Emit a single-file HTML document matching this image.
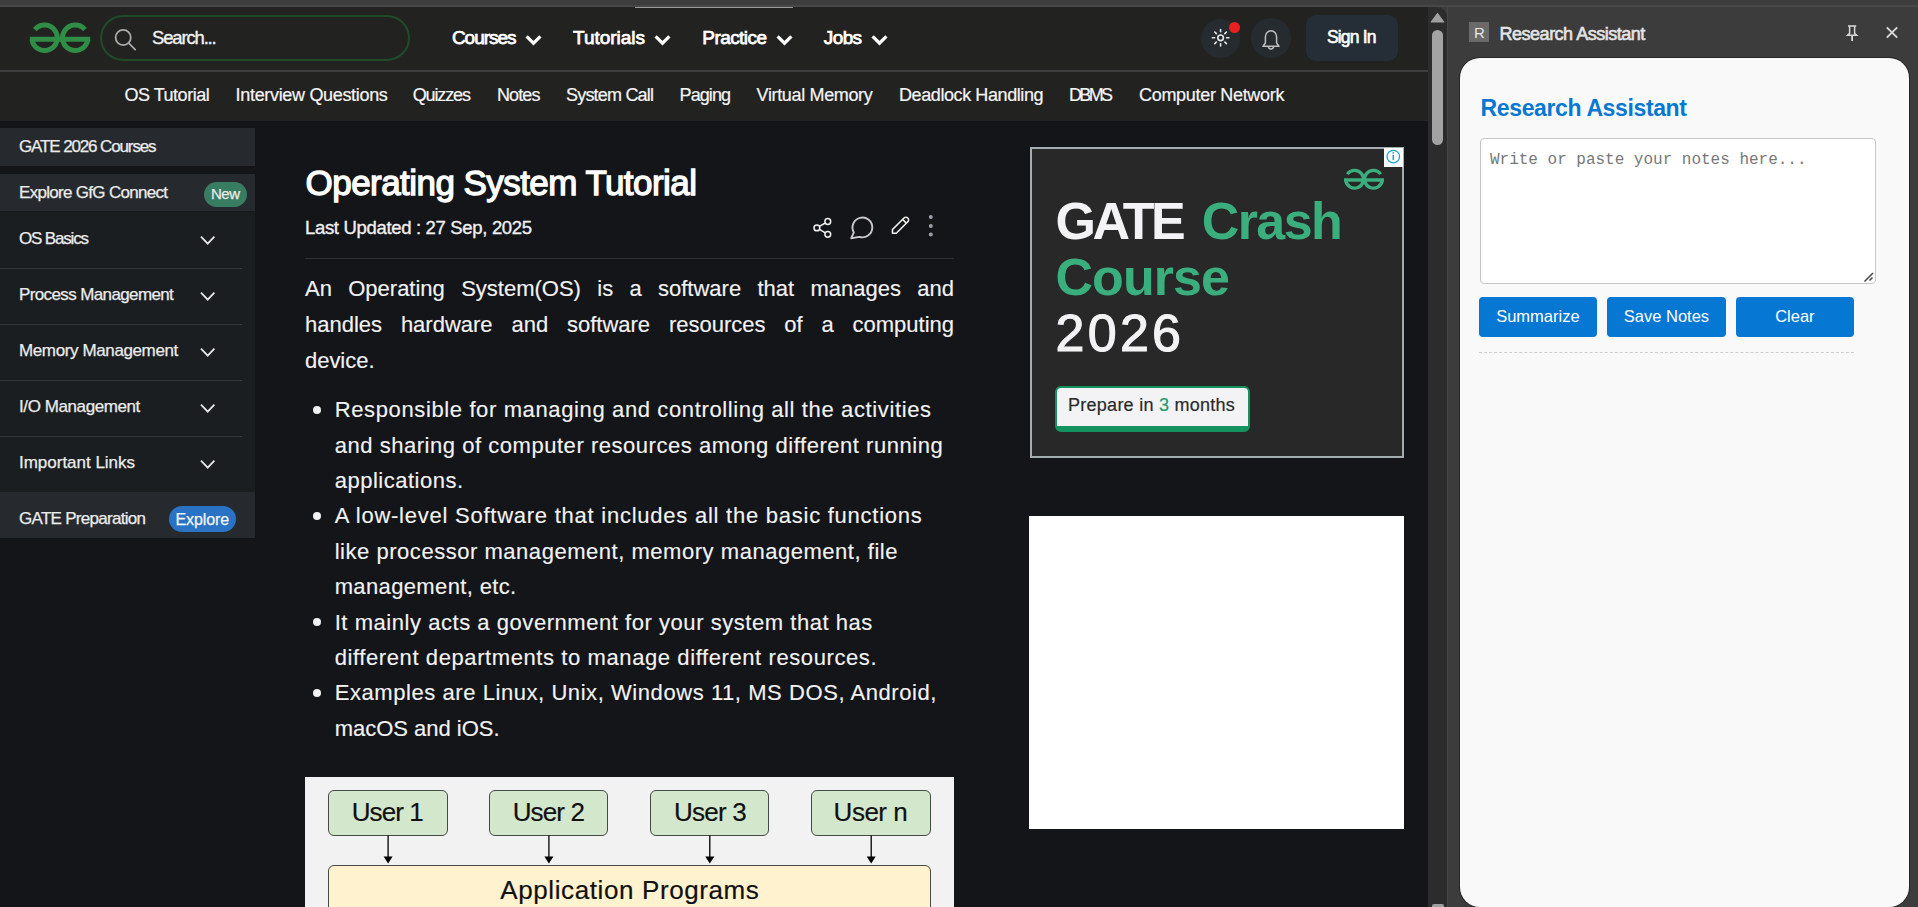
<!DOCTYPE html><html><head><meta charset="utf-8"><style>
html,body{margin:0;padding:0;}
body{width:1918px;height:907px;overflow:hidden;position:relative;background:#141519;font-family:"Liberation Sans",sans-serif;}
.t{position:absolute;white-space:pre;}
.b{position:absolute;box-sizing:border-box;}
svg{position:absolute;overflow:visible;}
</style></head><body>
<div class="b" style="left:0px;top:0px;width:1918px;height:5px;background:#3d3d3d;"></div>
<div class="b" style="left:0px;top:5px;width:1918px;height:2px;background:#474847;"></div>
<div class="b" style="left:0px;top:7px;width:1428px;height:63px;background:#222221;"></div>
<div class="b" style="left:635px;top:7px;width:158px;height:1px;background:#9a9a9a;"></div>
<div class="b" style="left:0px;top:70px;width:1428px;height:2px;background:#3e3e3e;"></div>
<div class="b" style="left:0px;top:72px;width:1428px;height:49px;background:#222221;"></div>
<svg style="left:0;top:0" width="1" height="1"><g fill="none" stroke="#2f8d46" stroke-width="5">
<path d="M 34.87 29.64 A 12.7 12.7 0 1 1 31.98 39.20"/>
<path d="M 84.93 29.64 A 12.7 12.7 0 1 0 87.82 39.20"/>
<path d="M 29.9 39.2 L 90.2 39.2"/>
</g></svg>
<div class="b" style="left:100px;top:15px;width:310px;height:46px;border:2px solid #204b29;border-radius:23px;"></div>
<svg style="left:0;top:0" width="1" height="1"><g fill="none" stroke="#a9a9a9" stroke-width="1.8">
<circle cx="123.2" cy="37.5" r="7.6"/><path d="M 128.8 43.2 L 135.2 49.6" stroke-linecap="round"/></g></svg>
<div class="t" style="left:152.00px;top:29.00px;font-size:18.5px;line-height:18.5px;font-family:'Liberation Sans', sans-serif;font-weight:normal;color:#f2f2f2;letter-spacing:-1.164px;-webkit-text-stroke:0.35px #f2f2f2;">Search...</div>
<div class="t" style="left:451.90px;top:28.00px;font-size:19px;line-height:19px;font-family:'Liberation Sans', sans-serif;font-weight:normal;color:#ffffff;letter-spacing:-1.022px;-webkit-text-stroke:0.75px #ffffff;">Courses</div>
<svg style="left:0;top:0" width="1" height="1"><polyline points="526.6,36.3 533.5,43.2 540.4,36.3" fill="none" stroke="#fff" stroke-width="3.2" stroke-linejoin="miter"/></svg>
<div class="t" style="left:573.00px;top:28.00px;font-size:19px;line-height:19px;font-family:'Liberation Sans', sans-serif;font-weight:normal;color:#ffffff;letter-spacing:-0.018px;-webkit-text-stroke:0.75px #ffffff;">Tutorials</div>
<svg style="left:0;top:0" width="1" height="1"><polyline points="655.6,36.3 662.5,43.2 669.4,36.3" fill="none" stroke="#fff" stroke-width="3.2" stroke-linejoin="miter"/></svg>
<div class="t" style="left:702.30px;top:28.00px;font-size:19px;line-height:19px;font-family:'Liberation Sans', sans-serif;font-weight:normal;color:#ffffff;letter-spacing:-0.561px;-webkit-text-stroke:0.75px #ffffff;">Practice</div>
<svg style="left:0;top:0" width="1" height="1"><polyline points="777.6,36.3 784.5,43.2 791.4,36.3" fill="none" stroke="#fff" stroke-width="3.2" stroke-linejoin="miter"/></svg>
<div class="t" style="left:823.80px;top:28.00px;font-size:19px;line-height:19px;font-family:'Liberation Sans', sans-serif;font-weight:normal;color:#ffffff;letter-spacing:-0.608px;-webkit-text-stroke:0.75px #ffffff;">Jobs</div>
<svg style="left:0;top:0" width="1" height="1"><polyline points="872.6,36.3 879.5,43.2 886.4,36.3" fill="none" stroke="#fff" stroke-width="3.2" stroke-linejoin="miter"/></svg>
<div class="b" style="left:1200.5px;top:18.5px;width:39px;height:39px;border-radius:50%;background:#262b30"></div>
<div class="b" style="left:1251px;top:18px;width:40px;height:40px;border-radius:50%;background:#262b30"></div>
<svg style="left:0;top:0" width="1" height="1"><g stroke="#e8e8e8" stroke-width="1.6" fill="none" stroke-linecap="round"><circle cx="1220.6" cy="37.8" r="2.8"/><path d="M 1226.60 37.80 L 1228.80 37.80"/><path d="M 1224.84 42.04 L 1226.40 43.60"/><path d="M 1220.60 43.80 L 1220.60 46.00"/><path d="M 1216.36 42.04 L 1214.80 43.60"/><path d="M 1214.60 37.80 L 1212.40 37.80"/><path d="M 1216.36 33.56 L 1214.80 32.00"/><path d="M 1220.60 31.80 L 1220.60 29.60"/><path d="M 1224.84 33.56 L 1226.40 32.00"/></g></svg>
<div class="b" style="left:1229px;top:21.5px;width:11px;height:11px;border-radius:50%;background:#e8201f"></div>
<svg style="left:0;top:0" width="1" height="1"><g stroke="#bdbdbd" stroke-width="1.5" fill="none" stroke-linejoin="round">
<path d="M 1263 46.3 L 1279 46.3 L 1276.6 43 L 1276.6 37 A 5.6 6.4 0 0 0 1265.4 37 L 1265.4 43 Z"/>
<path d="M 1268.4 46.3 A 2.6 2.6 0 0 0 1273.6 46.3"/></g></svg>
<div class="b" style="left:1306px;top:15px;width:92px;height:46px;border-radius:10px;background:#252e36"></div>
<div class="t" style="left:1327.00px;top:29.00px;font-size:17.5px;line-height:17.5px;font-family:'Liberation Sans', sans-serif;font-weight:normal;color:#ffffff;letter-spacing:-0.847px;-webkit-text-stroke:0.6px #ffffff;">Sign In</div>
<div class="t" style="left:124.50px;top:86.00px;font-size:18px;line-height:18px;font-family:'Liberation Sans', sans-serif;font-weight:normal;color:#f5f5f5;letter-spacing:-0.485px;-webkit-text-stroke:0.2px #f5f5f5;">OS Tutorial</div>
<div class="t" style="left:235.60px;top:86.00px;font-size:18px;line-height:18px;font-family:'Liberation Sans', sans-serif;font-weight:normal;color:#f5f5f5;letter-spacing:-0.323px;-webkit-text-stroke:0.2px #f5f5f5;">Interview Questions</div>
<div class="t" style="left:412.70px;top:86.00px;font-size:18px;line-height:18px;font-family:'Liberation Sans', sans-serif;font-weight:normal;color:#f5f5f5;letter-spacing:-1.122px;-webkit-text-stroke:0.2px #f5f5f5;">Quizzes</div>
<div class="t" style="left:496.90px;top:86.00px;font-size:18px;line-height:18px;font-family:'Liberation Sans', sans-serif;font-weight:normal;color:#f5f5f5;letter-spacing:-0.858px;-webkit-text-stroke:0.2px #f5f5f5;">Notes</div>
<div class="t" style="left:566.00px;top:86.00px;font-size:18px;line-height:18px;font-family:'Liberation Sans', sans-serif;font-weight:normal;color:#f5f5f5;letter-spacing:-0.803px;-webkit-text-stroke:0.2px #f5f5f5;">System Call</div>
<div class="t" style="left:679.60px;top:86.00px;font-size:18px;line-height:18px;font-family:'Liberation Sans', sans-serif;font-weight:normal;color:#f5f5f5;letter-spacing:-0.933px;-webkit-text-stroke:0.2px #f5f5f5;">Paging</div>
<div class="t" style="left:756.60px;top:86.00px;font-size:18px;line-height:18px;font-family:'Liberation Sans', sans-serif;font-weight:normal;color:#f5f5f5;letter-spacing:-0.349px;-webkit-text-stroke:0.2px #f5f5f5;">Virtual Memory</div>
<div class="t" style="left:899.00px;top:86.00px;font-size:18px;line-height:18px;font-family:'Liberation Sans', sans-serif;font-weight:normal;color:#f5f5f5;letter-spacing:-0.409px;-webkit-text-stroke:0.2px #f5f5f5;">Deadlock Handling</div>
<div class="t" style="left:1069.00px;top:86.00px;font-size:18px;line-height:18px;font-family:'Liberation Sans', sans-serif;font-weight:normal;color:#f5f5f5;letter-spacing:-2.667px;-webkit-text-stroke:0.2px #f5f5f5;">DBMS</div>
<div class="t" style="left:1139.00px;top:86.00px;font-size:18px;line-height:18px;font-family:'Liberation Sans', sans-serif;font-weight:normal;color:#f5f5f5;letter-spacing:-0.306px;-webkit-text-stroke:0.2px #f5f5f5;">Computer Network</div>
<div class="b" style="left:0px;top:128px;width:255px;height:38px;background:#262a2e;"></div>
<div class="b" style="left:0px;top:174px;width:255px;height:38px;background:#262a2e;"></div>
<div class="b" style="left:0px;top:212px;width:255px;height:280px;background:#1b1e21;"></div>
<div class="b" style="left:0px;top:211px;width:255px;height:1px;background:#17191c;"></div>
<div class="b" style="left:0px;top:492px;width:255px;height:46px;background:#262a2e;"></div>
<div class="b" style="left:0px;top:268px;width:242px;height:1px;background:#34383c;"></div>
<div class="b" style="left:0px;top:324px;width:242px;height:1px;background:#34383c;"></div>
<div class="b" style="left:0px;top:380px;width:242px;height:1px;background:#34383c;"></div>
<div class="b" style="left:0px;top:436px;width:242px;height:1px;background:#34383c;"></div>
<div class="t" style="left:19.00px;top:138.00px;font-size:17px;line-height:17px;font-family:'Liberation Sans', sans-serif;font-weight:normal;color:#ececec;letter-spacing:-1.124px;-webkit-text-stroke:0.25px #ececec;">GATE 2026 Courses</div>
<div class="t" style="left:19.00px;top:184.00px;font-size:17px;line-height:17px;font-family:'Liberation Sans', sans-serif;font-weight:normal;color:#ececec;letter-spacing:-0.697px;-webkit-text-stroke:0.25px #ececec;">Explore GfG Connect</div>
<div class="b" style="left:204px;top:182px;width:43px;height:25px;border-radius:13px;background:#387c62"></div>
<div class="t" style="left:211.00px;top:186.00px;font-size:15px;line-height:15px;font-family:'Liberation Sans', sans-serif;font-weight:normal;color:#eaeaea;letter-spacing:-0.500px;-webkit-text-stroke:0.25px #eaeaea;">New</div>
<div class="t" style="left:19.00px;top:230.00px;font-size:17px;line-height:17px;font-family:'Liberation Sans', sans-serif;font-weight:normal;color:#ececec;letter-spacing:-1.170px;-webkit-text-stroke:0.25px #ececec;">OS Basics</div>
<svg style="left:0;top:0" width="1" height="1"><polyline points="201,236.7 207.7,243.7 214.4,236.7" fill="none" stroke="#e6e6e6" stroke-width="1.8"/></svg>
<div class="t" style="left:19.00px;top:286.00px;font-size:17px;line-height:17px;font-family:'Liberation Sans', sans-serif;font-weight:normal;color:#ececec;letter-spacing:-0.619px;-webkit-text-stroke:0.25px #ececec;">Process Management</div>
<svg style="left:0;top:0" width="1" height="1"><polyline points="201,292.7 207.7,299.7 214.4,292.7" fill="none" stroke="#e6e6e6" stroke-width="1.8"/></svg>
<div class="t" style="left:19.00px;top:342.00px;font-size:17px;line-height:17px;font-family:'Liberation Sans', sans-serif;font-weight:normal;color:#ececec;letter-spacing:-0.381px;-webkit-text-stroke:0.25px #ececec;">Memory Management</div>
<svg style="left:0;top:0" width="1" height="1"><polyline points="201,348.7 207.7,355.7 214.4,348.7" fill="none" stroke="#e6e6e6" stroke-width="1.8"/></svg>
<div class="t" style="left:19.00px;top:398.00px;font-size:17px;line-height:17px;font-family:'Liberation Sans', sans-serif;font-weight:normal;color:#ececec;letter-spacing:-0.406px;-webkit-text-stroke:0.25px #ececec;">I/O Management</div>
<svg style="left:0;top:0" width="1" height="1"><polyline points="201,404.7 207.7,411.7 214.4,404.7" fill="none" stroke="#e6e6e6" stroke-width="1.8"/></svg>
<div class="t" style="left:19.00px;top:454.00px;font-size:17px;line-height:17px;font-family:'Liberation Sans', sans-serif;font-weight:normal;color:#ececec;letter-spacing:-0.013px;-webkit-text-stroke:0.25px #ececec;">Important Links</div>
<svg style="left:0;top:0" width="1" height="1"><polyline points="201,460.7 207.7,467.7 214.4,460.7" fill="none" stroke="#e6e6e6" stroke-width="1.8"/></svg>
<div class="t" style="left:19.00px;top:510.00px;font-size:17px;line-height:17px;font-family:'Liberation Sans', sans-serif;font-weight:normal;color:#ececec;letter-spacing:-0.708px;-webkit-text-stroke:0.25px #ececec;">GATE Preparation</div>
<div class="b" style="left:169px;top:506px;width:67px;height:26px;border-radius:13px;background:#2a72c4"></div>
<div class="t" style="left:175.50px;top:512.00px;font-size:16px;line-height:16px;font-family:'Liberation Sans', sans-serif;font-weight:normal;color:#f4f4f4;letter-spacing:-0.080px;-webkit-text-stroke:0.25px #f4f4f4;">Explore</div>
<div class="t" style="left:305.60px;top:165.00px;font-size:35px;line-height:35px;font-family:'Liberation Sans', sans-serif;font-weight:normal;color:#ffffff;letter-spacing:-0.552px;-webkit-text-stroke:1.3px #ffffff;">Operating System Tutorial</div>
<div class="t" style="left:305.00px;top:219.00px;font-size:18.5px;line-height:18.5px;font-family:'Liberation Sans', sans-serif;font-weight:normal;color:#f0f0f0;letter-spacing:-0.325px;-webkit-text-stroke:0.35px #f0f0f0;">Last Updated : 27 Sep, 2025</div>
<svg style="left:0;top:0" width="1" height="1"><g fill="none" stroke="#f0f0f0" stroke-width="1.5">
<circle cx="827.8" cy="221.5" r="2.9"/><circle cx="816.9" cy="227.9" r="2.9"/><circle cx="827.8" cy="234.3" r="2.9"/>
<path d="M 819.4 226.4 L 825.3 223"/><path d="M 819.4 229.4 L 825.3 232.8"/>
</g>
<g fill="none" stroke="#c9c9cc" stroke-width="1.9" stroke-linejoin="round">
<path d="M 859.34 236.82 A 9.9 9.9 0 1 0 853.83 232.35 L 851.2 238.2 Z"/>
</g>
<g fill="none" stroke="#f0f0f0" stroke-width="1.6" stroke-linejoin="round">
<path d="M 892.5 229.5 L 904 218 A 2.4 2.4 0 0 1 907.8 221.8 L 896.3 233.3 L 892.5 233.3 Z"/><path d="M 902.6 219.4 L 906.4 223.2"/>
</g>
<g fill="#9aa0aa"><circle cx="930.8" cy="217.1" r="2"/><circle cx="930.8" cy="226" r="2"/><circle cx="930.8" cy="234.4" r="2"/></g>
</svg>
<div class="b" style="left:305px;top:258px;width:649px;height:1px;background:#2b3034;"></div>
<div class="t" style="left:305.00px;top:278.00px;font-size:22px;line-height:22px;font-family:'Liberation Sans', sans-serif;font-weight:normal;color:#f2f2f2;letter-spacing:0.000px;-webkit-text-stroke:0.15px #f2f2f2;">An</div>
<div class="t" style="left:348.22px;top:278.00px;font-size:22px;line-height:22px;font-family:'Liberation Sans', sans-serif;font-weight:normal;color:#f2f2f2;letter-spacing:0.000px;-webkit-text-stroke:0.15px #f2f2f2;">Operating</div>
<div class="t" style="left:461.15px;top:278.00px;font-size:22px;line-height:22px;font-family:'Liberation Sans', sans-serif;font-weight:normal;color:#f2f2f2;letter-spacing:0.000px;-webkit-text-stroke:0.15px #f2f2f2;">System(OS)</div>
<div class="t" style="left:597.25px;top:278.00px;font-size:22px;line-height:22px;font-family:'Liberation Sans', sans-serif;font-weight:normal;color:#f2f2f2;letter-spacing:0.000px;-webkit-text-stroke:0.15px #f2f2f2;">is</div>
<div class="t" style="left:629.46px;top:278.00px;font-size:22px;line-height:22px;font-family:'Liberation Sans', sans-serif;font-weight:normal;color:#f2f2f2;letter-spacing:0.000px;-webkit-text-stroke:0.15px #f2f2f2;">a</div>
<div class="t" style="left:658.01px;top:278.00px;font-size:22px;line-height:22px;font-family:'Liberation Sans', sans-serif;font-weight:normal;color:#f2f2f2;letter-spacing:0.000px;-webkit-text-stroke:0.15px #f2f2f2;">software</div>
<div class="t" style="left:757.47px;top:278.00px;font-size:22px;line-height:22px;font-family:'Liberation Sans', sans-serif;font-weight:normal;color:#f2f2f2;letter-spacing:0.000px;-webkit-text-stroke:0.15px #f2f2f2;">that</div>
<div class="t" style="left:810.48px;top:278.00px;font-size:22px;line-height:22px;font-family:'Liberation Sans', sans-serif;font-weight:normal;color:#f2f2f2;letter-spacing:0.000px;-webkit-text-stroke:0.15px #f2f2f2;">manages</div>
<div class="t" style="left:917.30px;top:278.00px;font-size:22px;line-height:22px;font-family:'Liberation Sans', sans-serif;font-weight:normal;color:#f2f2f2;letter-spacing:0.000px;-webkit-text-stroke:0.15px #f2f2f2;">and</div>
<div class="t" style="left:305.00px;top:314.00px;font-size:22px;line-height:22px;font-family:'Liberation Sans', sans-serif;font-weight:normal;color:#f2f2f2;letter-spacing:0.000px;-webkit-text-stroke:0.15px #f2f2f2;">handles</div>
<div class="t" style="left:400.88px;top:314.00px;font-size:22px;line-height:22px;font-family:'Liberation Sans', sans-serif;font-weight:normal;color:#f2f2f2;letter-spacing:0.000px;-webkit-text-stroke:0.15px #f2f2f2;">hardware</div>
<div class="t" style="left:511.41px;top:314.00px;font-size:22px;line-height:22px;font-family:'Liberation Sans', sans-serif;font-weight:normal;color:#f2f2f2;letter-spacing:0.000px;-webkit-text-stroke:0.15px #f2f2f2;">and</div>
<div class="t" style="left:566.93px;top:314.00px;font-size:22px;line-height:22px;font-family:'Liberation Sans', sans-serif;font-weight:normal;color:#f2f2f2;letter-spacing:0.000px;-webkit-text-stroke:0.15px #f2f2f2;">software</div>
<div class="t" style="left:668.88px;top:314.00px;font-size:22px;line-height:22px;font-family:'Liberation Sans', sans-serif;font-weight:normal;color:#f2f2f2;letter-spacing:0.000px;-webkit-text-stroke:0.15px #f2f2f2;">resources</div>
<div class="t" style="left:784.29px;top:314.00px;font-size:22px;line-height:22px;font-family:'Liberation Sans', sans-serif;font-weight:normal;color:#f2f2f2;letter-spacing:0.000px;-webkit-text-stroke:0.15px #f2f2f2;">of</div>
<div class="t" style="left:821.45px;top:314.00px;font-size:22px;line-height:22px;font-family:'Liberation Sans', sans-serif;font-weight:normal;color:#f2f2f2;letter-spacing:0.000px;-webkit-text-stroke:0.15px #f2f2f2;">a</div>
<div class="t" style="left:852.50px;top:314.00px;font-size:22px;line-height:22px;font-family:'Liberation Sans', sans-serif;font-weight:normal;color:#f2f2f2;letter-spacing:0.000px;-webkit-text-stroke:0.15px #f2f2f2;">computing</div>
<div class="t" style="left:305.00px;top:350.00px;font-size:22px;line-height:22px;font-family:'Liberation Sans', sans-serif;font-weight:normal;color:#f2f2f2;letter-spacing:-0.034px;-webkit-text-stroke:0.15px #f2f2f2;">device.</div>
<div class="t" style="left:334.70px;top:399.00px;font-size:22px;line-height:22px;font-family:'Liberation Sans', sans-serif;font-weight:normal;color:#f2f2f2;letter-spacing:0.625px;-webkit-text-stroke:0.15px #f2f2f2;">Responsible for managing and controlling all the activities</div>
<div class="b" style="left:313px;top:405.8px;width:8px;height:8px;border-radius:50%;background:#f2f2f2"></div>
<div class="t" style="left:334.70px;top:435.00px;font-size:22px;line-height:22px;font-family:'Liberation Sans', sans-serif;font-weight:normal;color:#f2f2f2;letter-spacing:0.535px;-webkit-text-stroke:0.15px #f2f2f2;">and sharing of computer resources among different running</div>
<div class="t" style="left:334.70px;top:470.00px;font-size:22px;line-height:22px;font-family:'Liberation Sans', sans-serif;font-weight:normal;color:#f2f2f2;letter-spacing:0.500px;-webkit-text-stroke:0.15px #f2f2f2;">applications.</div>
<div class="t" style="left:334.70px;top:505.00px;font-size:22px;line-height:22px;font-family:'Liberation Sans', sans-serif;font-weight:normal;color:#f2f2f2;letter-spacing:0.754px;-webkit-text-stroke:0.15px #f2f2f2;">A low-level Software that includes all the basic functions</div>
<div class="b" style="left:313px;top:511.9px;width:8px;height:8px;border-radius:50%;background:#f2f2f2"></div>
<div class="t" style="left:334.70px;top:541.00px;font-size:22px;line-height:22px;font-family:'Liberation Sans', sans-serif;font-weight:normal;color:#f2f2f2;letter-spacing:0.531px;-webkit-text-stroke:0.15px #f2f2f2;">like processor management, memory management, file</div>
<div class="t" style="left:334.70px;top:576.00px;font-size:22px;line-height:22px;font-family:'Liberation Sans', sans-serif;font-weight:normal;color:#f2f2f2;letter-spacing:0.361px;-webkit-text-stroke:0.15px #f2f2f2;">management, etc.</div>
<div class="t" style="left:334.70px;top:612.00px;font-size:22px;line-height:22px;font-family:'Liberation Sans', sans-serif;font-weight:normal;color:#f2f2f2;letter-spacing:0.545px;-webkit-text-stroke:0.15px #f2f2f2;">It mainly acts a government for your system that has</div>
<div class="b" style="left:313px;top:618.0px;width:8px;height:8px;border-radius:50%;background:#f2f2f2"></div>
<div class="t" style="left:334.70px;top:647.00px;font-size:22px;line-height:22px;font-family:'Liberation Sans', sans-serif;font-weight:normal;color:#f2f2f2;letter-spacing:0.593px;-webkit-text-stroke:0.15px #f2f2f2;">different departments to manage different resources.</div>
<div class="t" style="left:334.70px;top:682.00px;font-size:22px;line-height:22px;font-family:'Liberation Sans', sans-serif;font-weight:normal;color:#f2f2f2;letter-spacing:0.564px;-webkit-text-stroke:0.15px #f2f2f2;">Examples are Linux, Unix, Windows 11, MS DOS, Android,</div>
<div class="b" style="left:313px;top:688.8px;width:8px;height:8px;border-radius:50%;background:#f2f2f2"></div>
<div class="t" style="left:334.70px;top:718.00px;font-size:22px;line-height:22px;font-family:'Liberation Sans', sans-serif;font-weight:normal;color:#f2f2f2;letter-spacing:-0.019px;-webkit-text-stroke:0.15px #f2f2f2;">macOS and iOS.</div>
<div class="b" style="left:305px;top:777px;width:649px;height:130px;background:#f2f2f2;"></div>
<div class="b" style="left:328.3px;top:790px;width:119.5px;height:45.5px;background:#d3e7cd;border:1px solid #454a46;border-radius:6px"></div>
<div class="t" style="left:351.70px;top:799.00px;font-size:26px;line-height:26px;font-family:'Liberation Sans', sans-serif;font-weight:normal;color:#111111;letter-spacing:-0.892px;-webkit-text-stroke:0.2px #111111;">User 1</div>
<svg style="left:0;top:0" width="1" height="1"><path d="M 388.1 835.5 L 388.1 857" stroke="#000" stroke-width="1.3"/><path d="M 383.6 856.5 L 392.6 856.5 L 388.1 863.5 Z" fill="#000"/></svg>
<div class="b" style="left:489.3px;top:790px;width:119.1px;height:45.5px;background:#d3e7cd;border:1px solid #454a46;border-radius:6px"></div>
<div class="t" style="left:512.70px;top:799.00px;font-size:26px;line-height:26px;font-family:'Liberation Sans', sans-serif;font-weight:normal;color:#111111;letter-spacing:-0.853px;-webkit-text-stroke:0.2px #111111;">User 2</div>
<svg style="left:0;top:0" width="1" height="1"><path d="M 548.9 835.5 L 548.9 857" stroke="#000" stroke-width="1.3"/><path d="M 544.4 856.5 L 553.4 856.5 L 548.9 863.5 Z" fill="#000"/></svg>
<div class="b" style="left:650.3px;top:790px;width:119.1px;height:45.5px;background:#d3e7cd;border:1px solid #454a46;border-radius:6px"></div>
<div class="t" style="left:674.00px;top:799.00px;font-size:26px;line-height:26px;font-family:'Liberation Sans', sans-serif;font-weight:normal;color:#111111;letter-spacing:-0.772px;-webkit-text-stroke:0.2px #111111;">User 3</div>
<svg style="left:0;top:0" width="1" height="1"><path d="M 709.8 835.5 L 709.8 857" stroke="#000" stroke-width="1.3"/><path d="M 705.3 856.5 L 714.3 856.5 L 709.8 863.5 Z" fill="#000"/></svg>
<div class="b" style="left:811.3px;top:790px;width:119.8px;height:45.5px;background:#d3e7cd;border:1px solid #454a46;border-radius:6px"></div>
<div class="t" style="left:833.60px;top:799.00px;font-size:26px;line-height:26px;font-family:'Liberation Sans', sans-serif;font-weight:normal;color:#111111;letter-spacing:-0.492px;-webkit-text-stroke:0.2px #111111;">User n</div>
<svg style="left:0;top:0" width="1" height="1"><path d="M 871.2 835.5 L 871.2 857" stroke="#000" stroke-width="1.3"/><path d="M 866.7 856.5 L 875.7 856.5 L 871.2 863.5 Z" fill="#000"/></svg>
<div class="b" style="left:328.3px;top:864.5px;width:602.8px;height:60px;background:#fff2cf;border:1px solid #454a46;border-radius:6px"></div>
<div class="t" style="left:500.30px;top:877.00px;font-size:26px;line-height:26px;font-family:'Liberation Sans', sans-serif;font-weight:normal;color:#111111;letter-spacing:0.602px;-webkit-text-stroke:0.2px #111111;">Application Programs</div>
<div class="b" style="left:1029.5px;top:147px;width:374px;height:311px;background:#282828;border:2px solid #a3adb2;"></div>
<div class="t" style="left:1055.50px;top:195.00px;font-size:52px;line-height:52px;font-family:'Liberation Sans', sans-serif;font-weight:bold;color:#f3f3f5;letter-spacing:-3.498px;">GATE</div>
<div class="t" style="left:1201.80px;top:195.00px;font-size:52px;line-height:52px;font-family:'Liberation Sans', sans-serif;font-weight:bold;color:#3bae7e;letter-spacing:-1.623px;">Crash</div>
<div class="t" style="left:1055.50px;top:251.00px;font-size:52px;line-height:52px;font-family:'Liberation Sans', sans-serif;font-weight:bold;color:#3bae7e;letter-spacing:-0.931px;">Course</div>
<div class="t" style="left:1055.50px;top:307.00px;font-size:52px;line-height:52px;font-family:'Liberation Sans', sans-serif;font-weight:normal;color:#f3f3f5;letter-spacing:3.271px;-webkit-text-stroke:1.1px #f3f3f5;">2026</div>
<div class="b" style="left:1054.5px;top:385.5px;width:195px;height:46px;background:#f3f3f5;border:2px solid #14925f;border-bottom-width:6px;border-radius:6px"></div>
<div class="t" style="left:1068.10px;top:396.00px;font-size:18px;line-height:18px;font-family:'Liberation Sans', sans-serif;font-weight:normal;color:#2a2a2a;letter-spacing:0.250px;-webkit-text-stroke:0.2px #2a2a2a;">Prepare in </div>
<div class="t" style="left:1158.93px;top:396.00px;font-size:18px;line-height:18px;font-family:'Liberation Sans', sans-serif;font-weight:normal;color:#1f9a68;letter-spacing:0.000px;-webkit-text-stroke:0.2px #1f9a68;">3</div>
<div class="t" style="left:1174.44px;top:396.00px;font-size:18px;line-height:18px;font-family:'Liberation Sans', sans-serif;font-weight:normal;color:#2a2a2a;letter-spacing:0.250px;-webkit-text-stroke:0.2px #2a2a2a;">months</div>
<svg style="left:0;top:0" width="1" height="1"><g fill="none" stroke="#3aae7e" stroke-width="3.3">
<path d="M 1347.31 174.10 A 8.9 8.9 0 1 1 1345.74 180.00"/>
<path d="M 1380.69 174.10 A 8.9 8.9 0 1 0 1382.26 180.00"/>
<path d="M 1344 180 L 1384 180"/>
</g></svg>
<div class="b" style="left:1384px;top:147.5px;width:19px;height:19px;background:#ffffff"></div>
<svg style="left:0;top:0" width="1" height="1"><circle cx="1393.3" cy="156.6" r="6.3" fill="none" stroke="#1fa3d4" stroke-width="1.3"/>
<path d="M 1393.3 155 L 1393.3 160" stroke="#1fa3d4" stroke-width="1.6"/><circle cx="1393.3" cy="152.8" r="0.9" fill="#1fa3d4"/></svg>
<div class="b" style="left:1029px;top:516px;width:375px;height:313px;background:#ffffff;"></div>
<div class="b" style="left:1428px;top:7px;width:20px;height:900px;background:#3c3c3c;"></div>
<div class="b" style="left:1428px;top:7px;width:19px;height:900px;background:#2c2c2c;border-top-right-radius:10px"></div>
<svg style="left:0;top:0" width="1" height="1"><path d="M 1437.5 13.5 L 1443.8 22 L 1431.2 22 Z" fill="#a0a0a0" stroke="#a0a0a0" stroke-width="1.2" stroke-linejoin="round"/></svg>
<div class="b" style="left:1432px;top:30px;width:11px;height:115px;background:#a3a3a3;border-radius:6px"></div>
<div class="b" style="left:1431.6px;top:904px;width:12px;height:5px;background:#a0a0a0;border-radius:2px"></div>
<div class="b" style="left:1447px;top:7px;width:1px;height:900px;background:#454745;"></div>
<div class="b" style="left:1448px;top:7px;width:470px;height:900px;background:#3c3c3c;"></div>
<div class="b" style="left:1469px;top:22px;width:20px;height:20px;background:#6a6a6a"></div>
<div class="t" style="left:1474.00px;top:25.00px;font-size:15px;line-height:15px;font-family:'Liberation Sans', sans-serif;font-weight:normal;color:#e6e6e6;letter-spacing:-0.828px;">R</div>
<div class="t" style="left:1499.60px;top:25.00px;font-size:18px;line-height:18px;font-family:'Liberation Sans', sans-serif;font-weight:normal;color:#e4e4e4;letter-spacing:-0.500px;-webkit-text-stroke:0.6px #e4e4e4;">Research Assistant</div>
<svg style="left:0;top:0" width="1" height="1"><g fill="none" stroke="#d8d8d8" stroke-width="1.5">
<path d="M 1848 26 L 1856.2 26"/><path d="M 1849.6 26 L 1849.6 33.4 L 1847.6 35.2 L 1856.6 35.2 L 1854.6 33.4 L 1854.6 26"/>
</g><path d="M 1852.1 35.5 L 1852.1 41" stroke="#d8d8d8" stroke-width="1.8"/>
<g stroke="#d8d8d8" stroke-width="1.9"><path d="M 1886.8 27.3 L 1897.2 37.7"/><path d="M 1897.2 27.3 L 1886.8 37.7"/></g></svg>
<div class="b" style="left:1459.5px;top:57.5px;width:449px;height:849.5px;background:#f9f9f9;border-radius:20px;box-shadow:0 0 0 1px #262626"></div>
<div class="t" style="left:1480.60px;top:97.00px;font-size:23px;line-height:23px;font-family:'Liberation Sans', sans-serif;font-weight:bold;color:#0678d3;letter-spacing:-0.369px;">Research Assistant</div>
<div class="b" style="left:1479.5px;top:137.5px;width:396px;height:146px;background:#ffffff;border:1px solid #c6c6c6;border-radius:4px"></div>
<div class="t" style="left:1490.00px;top:152.00px;font-size:16px;line-height:16px;font-family:'Liberation Mono', monospace;font-weight:normal;color:#787878;letter-spacing:-0.010px;">Write or paste your notes here...</div>
<svg style="left:0;top:0" width="1" height="1"><g stroke="#4a4a4a" stroke-width="1.6"><path d="M 1864.5 281.5 L 1873 273"/><path d="M 1869.5 280.5 L 1872.5 277.5"/></g></svg>
<div class="b" style="left:1479.2px;top:297px;width:117.4px;height:39.5px;background:#0678d3;border-radius:4px"></div>
<div class="t" style="left:1496.18px;top:308.00px;font-size:16.5px;line-height:16.5px;font-family:'Liberation Sans', sans-serif;font-weight:normal;color:#ffffff;letter-spacing:0.000px;">Summarize</div>
<div class="b" style="left:1607.2px;top:297px;width:118.5px;height:39.5px;background:#0678d3;border-radius:4px"></div>
<div class="t" style="left:1623.82px;top:308.00px;font-size:16.5px;line-height:16.5px;font-family:'Liberation Sans', sans-serif;font-weight:normal;color:#ffffff;letter-spacing:0.000px;">Save Notes</div>
<div class="b" style="left:1736px;top:297px;width:117.8px;height:39.5px;background:#0678d3;border-radius:4px"></div>
<div class="t" style="left:1775.18px;top:308.00px;font-size:16.5px;line-height:16.5px;font-family:'Liberation Sans', sans-serif;font-weight:normal;color:#ffffff;letter-spacing:0.000px;">Clear</div>
<div class="b" style="left:1479px;top:351.5px;width:375px;height:0;border-top:1px dashed #cfcfcf"></div>
</body></html>
